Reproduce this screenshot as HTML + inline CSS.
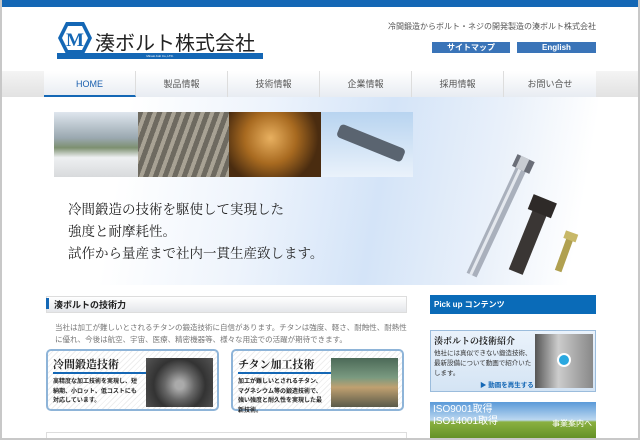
<!DOCTYPE html>
<html><head><meta charset="utf-8"><style>
*{margin:0;padding:0;box-sizing:border-box}
body{width:640px;height:440px;overflow:hidden;background:#c8c8c8;font-family:"Liberation Sans","Noto Sans CJK JP",sans-serif}
#pg{position:absolute;left:2px;top:0;width:636px;height:438px;background:#fff;overflow:hidden}
.a{position:absolute}
.serif{font-family:"Liberation Serif","Noto Serif CJK SC",serif}
.nav div{position:absolute;top:0;height:26px;line-height:26px;text-align:center;font-size:9px;color:#555;border-right:1px solid #ddd}
.card{position:absolute;top:349px;width:173px;height:62px;border:2px solid #8eb4d8;border-radius:5px;background:repeating-linear-gradient(135deg,#fff 0 3px,#eee 3px 4px)}
</style></head><body><div id="pg">
<div class="a" style="left:-2px;top:0;width:640px;height:7px;background:#1467b5"></div>
<svg class="a" style="left:55px;top:21px" width="36" height="34" viewBox="0 0 36 34"><polygon points="9,1 27,1 35,17 27,33 9,33 1,17" fill="#1467b5"/><polygon points="11,5 25,5 31,17 25,29 11,29 5,17" fill="#fff"/><text x="18" y="25" text-anchor="middle" font-size="19" font-weight="bold" fill="#1467b5" font-family="Liberation Serif,serif">M</text></svg>
<div class="a" style="left:93px;top:27px;font-size:20px;color:#222">湊ボルト株式会社</div>
<div class="a" style="left:55px;top:53px;width:206px;height:6px;background:#1467b5;color:#fff;font-size:3px;text-align:center;line-height:6px">Minato bolt Co.,LTD.</div>
<div class="a" style="left:380px;top:21px;width:214px;text-align:right;font-size:8px;color:#555">冷間鍛造からボルト・ネジの開発製造の湊ボルト株式会社</div>
<div class="a" style="left:430px;top:42px;width:78px;height:11px;background:#3a74b8;color:#fff;font-size:8px;font-weight:bold;text-align:center;line-height:11px">サイトマップ</div>
<div class="a" style="left:515px;top:42px;width:79px;height:11px;background:#3a74b8;color:#fff;font-size:8px;font-weight:bold;text-align:center;line-height:11px">English</div>
<div class="a" style="left:-2px;top:71px;width:640px;height:26px;background:linear-gradient(#f4f4f4,#e2e2e2)"></div>
<div class="a nav" style="left:42px;top:71px;width:552px;height:26px;background:linear-gradient(#fff,#e8ecf2)">
<div style="left:0;width:92px;color:#1a5fae;font-size:9px;border-bottom:2px solid #1467b5">HOME</div>
<div style="left:92px;width:92px">製品情報</div>
<div style="left:184px;width:92px">技術情報</div>
<div style="left:276px;width:92px">企業情報</div>
<div style="left:368px;width:92px">採用情報</div>
<div style="left:460px;width:92px;border:none">お問い合せ</div>
</div>
<div class="a" style="left:40px;top:97px;width:556px;height:188px;background:linear-gradient(100deg,#fff 15%,#eef4fc 38%,#d4e4f8 60%,#eaf1fa 80%,#fff 95%)"></div>
<div class="a" style="left:52px;top:112px;width:84px;height:65px;background:linear-gradient(#dfe6ee 0,#9aa8b0 40%,#7d9070 55%,#eef0f2 70%,#d8dadc)"></div>
<div class="a" style="left:136px;top:112px;width:91px;height:65px;background:repeating-linear-gradient(110deg,#6e6a60 0 5px,#a8a294 5px 9px)"></div>
<div class="a" style="left:227px;top:112px;width:92px;height:65px;background:radial-gradient(circle at 45% 40%,#e8b060,#a86a20 40%,#4a2c10 75%)"></div>
<div class="a" style="left:319px;top:112px;width:92px;height:65px;background:linear-gradient(#b8d4f0,#eaf2fb);overflow:hidden"><div class="a" style="left:15px;top:24px;width:70px;height:14px;background:#5a6470;transform:rotate(22deg);border-radius:4px"></div></div>
<div class="a serif" style="left:66px;top:199px;font-size:13.5px;line-height:22px;color:#222">冷間鍛造の技術を駆使して実現した<br>強度と耐摩耗性。<br>試作から量産まで社内一貫生産致します。</div>
<svg class="a" style="left:440px;top:140px" width="160" height="145" viewBox="0 0 160 145">
<g transform="translate(30,133) rotate(25)"><rect x="-5" y="-115" width="11" height="117" fill="#a9b0bc"/><rect x="-2" y="-115" width="3" height="117" fill="#e4e8ee"/><rect x="-9" y="-127" width="19" height="13" fill="#6a6e78"/><rect x="-5" y="-127" width="9" height="13" fill="#c8ccd2"/></g>
<g transform="translate(74,130) rotate(22)"><rect x="-7" y="-62" width="15" height="64" fill="#3a3634"/><rect x="-12" y="-77" width="25" height="16" fill="#2e2a28"/></g>
<g transform="translate(116,130) rotate(20)"><rect x="-3" y="-33" width="7" height="34" fill="#b0a050"/><rect x="-6" y="-40" width="13" height="8" fill="#c8b868"/></g>
</svg>
<div class="a" style="left:44px;top:296px;width:361px;height:17px;background:linear-gradient(#fff,#e4e6ea);border:1px solid #ddd"></div>
<div class="a" style="left:44px;top:298px;width:3px;height:11px;background:#1467b5"></div>
<div class="a" style="left:52px;top:298px;font-size:9px;font-weight:bold;color:#222">湊ボルトの技術力</div>
<div class="a" style="left:53px;top:322px;width:352px;font-size:7.5px;line-height:12px;color:#777">当社は加工が難しいとされるチタンの鍛造技術に自信があります。チタンは強度、軽さ、耐蝕性、耐熱性に優れ、今後は航空、宇宙、医療、精密機器等、様々な用途での活躍が期待できます。</div>
<div class="card" style="left:44px">
<div class="a serif" style="left:5px;top:5px;font-size:11px;font-weight:bold;color:#222">冷間鍛造技術</div>
<div class="a" style="left:5px;top:21px;width:96px;height:2px;background:#1467b5"></div>
<div class="a" style="left:5px;top:27px;width:86px;font-size:6px;line-height:9.5px;color:#222;font-weight:bold">高精度な加工技術を実現し、短納期、小ロット、低コストにも対応しています。</div>
<div class="a" style="left:98px;top:7px;width:67px;height:49px;background:radial-gradient(circle at 50% 55%,#aaa 10%,#666 35%,#333 60%,#555)"></div></div>
<div class="card" style="left:229px">
<div class="a serif" style="left:5px;top:5px;font-size:11px;font-weight:bold;color:#222">チタン加工技術</div>
<div class="a" style="left:5px;top:21px;width:96px;height:2px;background:#1467b5"></div>
<div class="a" style="left:5px;top:27px;width:88px;font-size:6px;line-height:9.5px;color:#222;font-weight:bold">加工が難しいとされるチタン、マグネシウム等の鍛造技術で、強い強度と耐久性を実現した最新技術。</div>
<div class="a" style="left:98px;top:7px;width:67px;height:49px;background:linear-gradient(#4c6a58,#7a9a80 40%,#c0a070 60%,#5a5a4a)"></div></div>
<div class="a" style="left:44px;top:432px;width:361px;height:10px;border:1px solid #ddd"></div>
<div class="a" style="left:428px;top:295px;width:166px;height:19px;background:#0a6bb8;color:#fff;font-size:8px;font-weight:bold;line-height:19px;padding-left:4px">Pick up コンテンツ</div>
<div class="a" style="left:428px;top:330px;width:166px;height:62px;background:linear-gradient(#eaf2fb,#d4e4f4);border:1px solid #9bbcdc"></div>
<div class="a serif" style="left:432px;top:334px;font-size:9px;font-weight:bold;color:#222">湊ボルトの技術紹介</div>
<div class="a" style="left:432px;top:349px;width:98px;font-size:6.5px;line-height:10px;color:#333">他社には真似できない鍛造技術、最新設備について動画で紹介いたします。</div>
<div class="a" style="left:478px;top:379px;font-size:6.5px;color:#1467b5;font-weight:bold">▶ 動画を再生する</div>
<div class="a" style="left:533px;top:334px;width:58px;height:54px;background:linear-gradient(90deg,#555,#ccc 40%,#888)"></div>
<div class="a" style="left:555px;top:353px;width:14px;height:14px;border-radius:50%;background:#2aa8e0;border:2px solid #fff"></div>
<div class="a" style="left:428px;top:402px;width:166px;height:40px;background:linear-gradient(#5a9ad8 0,#bcd8f0 45%,#8ab040 50%,#5a8a20)"></div>
<div class="a" style="left:431px;top:404px;font-size:10px;line-height:12px;color:#fff">ISO9001取得<br>ISO14001取得</div>
<div class="a" style="left:550px;top:418px;font-size:8px;color:#fff">事業案内へ</div>
</div></body></html>
